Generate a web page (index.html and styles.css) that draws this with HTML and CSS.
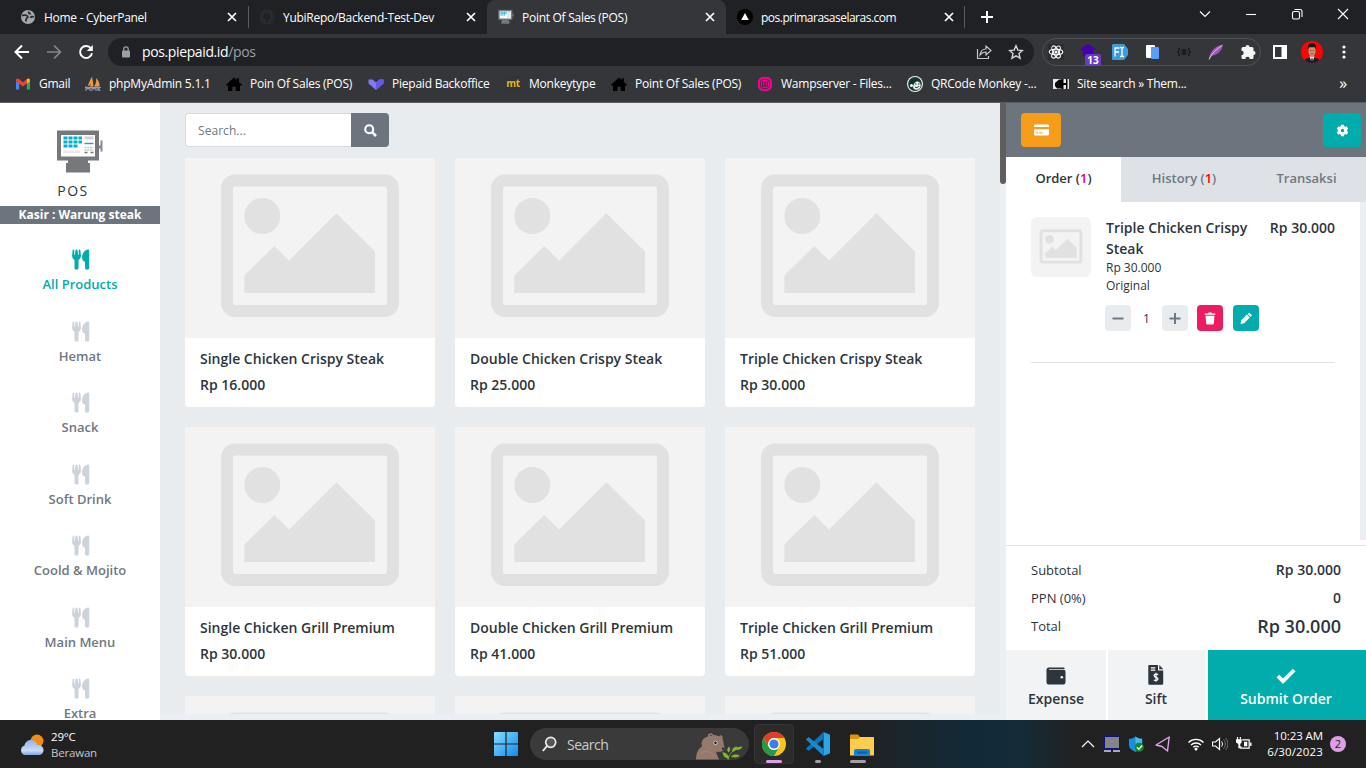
FILE: index.html
```html
<!DOCTYPE html>
<html lang="id">
<head>
<meta charset="utf-8">
<title>Point Of Sales (POS)</title>
<link rel="stylesheet" href="styles.css">
</head>
<body>
<svg class="defs" aria-hidden="true">
  <symbol id="x" viewBox="0 0 12 12"><path d="M2 2l8 8M10 2l-8 8" stroke="#fff" stroke-width="1.7" fill="none"/></symbol>
  <symbol id="home" viewBox="0 0 16 16"><path d="M8 1.5L10.7 4V2.3H13v3.8L16 8.8l-.9 1.1L14 9v6H9.700v-4.200H6.400V15H2V9L.9 9.900 0 8.800z" fill="#000"/></symbol>
  <symbol id="fork" viewBox="0 0 18 21"><path d="M1.500 .4C1 .4.700.9.600 1.400L.1 6.500C0 9 1.300 10.300 2.500 10.900V19c0 1 .9 1.700 2 1.700s2-.7 2-1.700v-8.100C7.700 10.300 9 9 8.900 6.500L8.400 1.400C8.300.9 8 .4 7.500.4S6.700.9 6.700 1.500V6H6.200L5.500 1.200C5.400.7 5 .4 4.500.4s-.9.3-1 .8L2.800 6H2.300V1.500C2.300.9 2 .4 1.500.4zM17.200 1.600C17.200.8 16.700.4 16 .4c-2.800.2-5.900 3.500-5.900 7.800 0 2.500 1 4.100 2.900 4.600V19c0 1 .9 1.700 2.100 1.700s2.100-.7 2.100-1.700z" fill="currentColor"/></symbol>
  <symbol id="ph" viewBox="0 0 250 180"><rect width="250" height="180" fill="#f3f3f3"/><rect x="42" y="22.500" width="166" height="130.500" rx="8" fill="none" stroke="#e1e1e1" stroke-width="12"/><circle cx="77.300" cy="58" r="18" fill="#e1e1e1"/><path d="M59.300 117.500L89.300 88l14.800 14.500 47.300-47.200L190 93.500V135H59.300z" fill="#e1e1e1"/></symbol>
  <symbol id="pos" viewBox="0 0 48 44"><path d="M1 .5h42v30H1z" fill="#77787b"/><path d="M43 15.500h1.500v-5h2v11h-2v-3H43z" fill="#8a8b8e"/><path d="M5 5h34v21.500H5z" fill="#fff"/><path d="M12 30h20v3h2v9.500H10V33h2z" fill="#77787b"/><path d="M7.500 8h18.500M7.500 12h18.500M7.500 16h14" stroke="#06aecb" stroke-width="3" stroke-dasharray="4 1" fill="none"/><path d="M28.500 6.500h9v3h-9z" fill="#d0d2d4"/><path d="M28.500 13.500h9" stroke="#06aecb" stroke-width="1.400"/><path d="M28.500 17.500h9M28.500 20h9" stroke="#c5c7ca" stroke-width="1.500" stroke-dasharray="2 .7"/><path d="M28.500 22.500h9" stroke="#77787b" stroke-width="1.500" stroke-dasharray="3 3"/><path d="M7.500 21.800h5M13.200 21.800h5M19 21.800h5" stroke="#e6e7e9" stroke-width="2.500"/></symbol>
</svg>

<header class="browser">
  <div class="tabstrip">
    <div class="tab"><svg class="i16" viewBox="0 0 16 16"><circle cx="8" cy="8" r="7" fill="#a4a8ad"/><path d="M2 6.500c2 0 3-1 4.500 0s2 1.500.5 2.500-1 2-1 3.500M9 2.500c-1 1.500.5 2.500 2 2M14 8c-1.500-.5-3-.5-3.500 1" fill="none" stroke="#2b2d30" stroke-width="1.800"/></svg><span>Home - CyberPanel</span><svg class="i12"><use href="#x"/></svg></div>
    <div class="tab divided"><svg class="i16" viewBox="0 0 16 16"><path d="M6 15v-3.500C3.800 10.800 3 9.500 3 7.600 3 6.500 3.400 5.700 4 5c-.2-1-.1-1.700.2-2.500 1 0 1.700.4 2.400 1h2.800c.7-.6 1.400-1 2.400-1 .3.800.4 1.500.2 2.500.6.700 1 1.500 1 2.600 0 1.900-.8 3.200-3 3.900V15" fill="none" stroke="#2b2f34" stroke-width="1.500"/><circle cx="8" cy="8" r="7" fill="none" stroke="#2b2f34" stroke-width="1.200"/></svg><span>YubiRepo/Backend-Test-Dev</span><svg class="i12"><use href="#x"/></svg></div>
    <div class="tab active"><svg class="i16"><use href="#pos"/></svg><span>Point Of Sales (POS)</span><svg class="i12"><use href="#x"/></svg></div>
    <div class="tab last"><svg class="i16" viewBox="0 0 16 16"><circle cx="8" cy="8" r="8" fill="#000"/><path d="M8 4l3.800 7H4.200z" fill="#fff"/></svg><span class="t4">pos.primarasaselaras.com</span><svg class="i12"><use href="#x"/></svg></div>
    <svg class="plus" viewBox="0 0 12 12"><path d="M6 0v12M0 6h12" stroke="#fff" stroke-width="2"/></svg>
    <div class="wincontrols">
      <svg viewBox="0 0 12 12"><path d="M1 3.500l5 5 5-5"/></svg>
      <svg viewBox="0 0 12 12"><path d="M1 6.500h10"/></svg>
      <svg viewBox="0 0 12 12"><rect x="1.500" y="3.500" width="7" height="7.500" rx="1.500"/><path d="M3.500 1.500h5.500a2 2 0 0 1 2 2v5.500"/></svg>
      <svg viewBox="0 0 12 12"><path d="M1 1l10 10M11 1L1 11"/></svg>
    </div>
  </div>
  <div class="toolbar">
    <div class="nav">
      <svg viewBox="0 0 16 16"><path d="M15 8H2M8 1.500L1.500 8 8 14.500" fill="none" stroke="#fff" stroke-width="2"/></svg>
      <svg viewBox="0 0 16 16"><path d="M1 8h13M8 1.500L14.500 8 8 14.500" fill="none" stroke="#84878b" stroke-width="1.700"/></svg>
      <svg viewBox="0 0 16 16"><path d="M13 4.500A6 6 0 1 0 14 9.200" fill="none" stroke="#fff" stroke-width="2"/><path d="M14.800 1v6H8.800z" fill="#fff"/></svg>
    </div>
    <div class="omnibox">
      <svg class="lock" viewBox="0 0 10 12"><rect x="1" y="4.500" width="8" height="7" rx="1" fill="#9aa0a6"/><path d="M2.800 5V3a2.200 2.200 0 0 1 4.400 0v2" fill="none" stroke="#9aa0a6" stroke-width="1.300"/></svg>
      <span class="url">pos.piepaid.id<i>/pos</i></span>
      <svg class="share" viewBox="0 0 16 16"><path d="M1.500 5v9.500h11V12M4 11c.5-4 3-6 6-6V2l5 4.500-5 4.500V8c-3 0-4.500 1-6 3z" fill="none" stroke="#c5c8cb" stroke-width="1.200"/></svg>
      <svg class="star" viewBox="0 0 16 16"><path d="M8 1.800l1.900 4.300 4.600.4-3.500 3.100 1.100 4.600L8 11.800l-4.100 2.400L5 9.600 1.500 6.500l4.600-.4z" fill="none" stroke="#d5d8db" stroke-width="1.400"/></svg>
    </div>
    <div class="exts">
      <svg viewBox="0 0 16 16"><path d="M0 0h16v16H0z" fill="#2b2d30"/><g fill="none" stroke="#fff" stroke-width="1.100"><ellipse cx="8" cy="8" rx="6.800" ry="2.700"/><ellipse cx="8" cy="8" rx="6.800" ry="2.700" transform="rotate(60 8 8)"/><ellipse cx="8" cy="8" rx="6.800" ry="2.700" transform="rotate(120 8 8)"/></g><circle cx="8" cy="8" r="1.500" fill="#fff"/></svg>
      <span class="cube"><svg viewBox="0 0 16 16"><path d="M8 0l8 5-3 2v5l-5 3-5-3V7L0 5z" fill="#4302a8"/></svg><b>13</b></span>
      <svg viewBox="0 0 16 16"><path d="M1 0h11l4 5v6l-4 5H1a1 1 0 0 1-1-1V1z" fill="#3c9bdc"/><path d="M3 12.500V4h4.500M3 8h4M8 3.500h1l1 .700 1-.700h1M10 4v8M8 12.500h1l1-.7 1 .7h1" fill="none" stroke="#fff" stroke-width="1.300"/></svg>
      <svg viewBox="0 0 16 16"><rect x="2" y="1" width="9" height="13" rx="1" fill="#fff"/><rect x="7" y="3" width="8" height="12" rx="1" fill="#589df6"/></svg>
      <svg viewBox="0 0 16 16"><path d="M4 4c-2 0 0 3.500-2.500 4C4 8.500 2 12 4 12M12 4c2 0 0 3.500 2.500 4-2.500.5-.5 4-2.500 4M5.500 6.200h5M5.500 8.200h5M5.500 10.200h5" fill="none" stroke="#111" stroke-width="1.200"/></svg>
      <svg viewBox="0 0 16 16"><path d="M1 15.500C1.500 7.500 7 2 15 .5 14.500 5 12 8 9 10c-2 1.300-4.500 1.500-6 2.500z" fill="#9b59b6"/><path d="M1 15.500C4 9 8 5.500 14 1.500" stroke="#e3c0f0" stroke-width="1" fill="none"/></svg>
      <svg viewBox="0 0 16 16"><path d="M5.500 3a2 2 0 0 1 4 0H12a1.500 1.500 0 0 1 1.500 1.500V7a2 2 0 0 1 0 4v2.500A1.500 1.500 0 0 1 12 15H9.700a2.200 2.200 0 0 0-4.400 0H3a1.500 1.500 0 0 1-1.500-1.500v-2.300a2.200 2.200 0 0 0 0-4.400V4.500A1.500 1.500 0 0 1 3 3z" fill="#f5f5f5"/></svg>
    </div>
    <div class="end">
      <svg viewBox="0 0 16 16"><path d="M1 1h14v14H1zM3 3v10h6.500V3z" fill="#fff" fill-rule="evenodd"/></svg>
      <svg class="avatar" viewBox="0 0 22 22"><clipPath id="av"><circle cx="11" cy="11" r="11"/></clipPath><g clip-path="url(#av)"><path d="M0 0h22v22H0z" fill="#fa0505"/><path d="M3 22c0-4 3-5.500 8-5.500s8 1.500 8 5.500z" fill="#171c2a"/><path d="M8.500 15.500L11 22l2.500-6.500z" fill="#fff"/><path d="M10.500 17h1l.7 5h-2.400z" fill="#222"/><ellipse cx="11" cy="10" rx="3.600" ry="5.800" fill="#c59174"/><path d="M7 8.500C6.500 4 8 2 11 2s4.500 2 4 6.500L14 6.300H8z" fill="#1b1516"/><path d="M9 9.500h1.500M11.700 9.500h1.500M9.700 13h2.600" stroke="#754a3c" stroke-width=".8"/></g></svg>
      <svg viewBox="0 0 16 16"><g fill="#fff"><circle cx="8" cy="3" r="1.600"/><circle cx="8" cy="8" r="1.600"/><circle cx="8" cy="13" r="1.600"/></g></svg>
    </div>
  </div>
  <nav class="bookmarks">
    <div><svg class="i16" viewBox="0 0 16 16"><path d="M1 4v9.500h3.200V7z" fill="#4285f4"/><path d="M15 4v9.500h-3.200V7z" fill="#34a853"/><path d="M1 4.200c0-1.700 1.800-2.300 3-1.200l4 3.200L12 3v4.200L8 10.500 1 5.500z" fill="#ea4335"/><path d="M11.800 3.200C13 2 15 2.500 15 4.200v1l-3.200 2.500z" fill="#fbbc04"/></svg><span>Gmail</span></div>
    <div><svg class="i16" viewBox="0 0 16 16"><path d="M7 .5C8 5 7 8 2.500 10.500 4 7 5 4 7 .5zM11 2c3 3 4 6 3.500 8.500H9C11 8 11.500 5 11 2zM7.500 3l1 7.500H5z" fill="#f29b38"/><path d="M0 11.500h16M1 15v-4l2 2 2-2v4M7 15v-4l2 2 2-2v4M13 15v-4l2 4" fill="none" stroke="#9999b8" stroke-width="1.100"/></svg><span>phpMyAdmin 5.1.1</span></div>
    <div><svg class="i16"><use href="#home"/></svg><span>Poin Of Sales (POS)</span></div>
    <div><svg class="i16" viewBox="0 0 16 16"><path d="M.5 3.500h4l3.500 3 3.500-3h4v4L8 14 .5 7.500z" fill="#8278f4"/><path d="M8 7l3.500-3.500h4v4L8 14z" fill="#6558ec"/></svg><span>Piepaid Backoffice</span></div>
    <div><span class="mt">mt</span><span>Monkeytype</span></div>
    <div><svg class="i16"><use href="#home"/></svg><span>Point Of Sales (POS)</span></div>
    <div><svg class="i16" viewBox="0 0 16 16"><rect x="1" y="1" width="14" height="14" rx="5" fill="#f2058f"/><rect x="3.300" y="3.300" width="9.400" height="9.400" rx="3.500" fill="none" stroke="#4a2440"/><path d="M5.700 5.500v4.800h4.600V5.500M8 5.500v4.500" fill="none" stroke="#4a2440" stroke-width="1.100"/></svg><span>Wampserver - Files...</span></div>
    <div><svg class="i16" viewBox="0 0 16 16"><circle cx="8" cy="8" r="8" fill="#eef4f1"/><circle cx="8" cy="8" r="6.900" fill="#183a35"/><circle cx="9.500" cy="9.500" r="4.200" fill="#e8eeeb"/><path d="M3 10C3 5 6 2 12 4 9 6 6.500 6 6 12z" fill="#10302c"/><path d="M8 8h1.500M11 8h1.500M8 11c1.500 1.300 3 .5 4-1" fill="none" stroke="#183a35"/><circle cx="4.500" cy="9.500" r="1.500" fill="#fff"/></svg><span>QRCode Monkey -...</span></div>
    <div><svg class="i16" viewBox="0 0 16 16"><path d="M0 3h16v10H0z" fill="#e8e8e8"/><path d="M2 7l4-3.500h3v9H4L2 10zM8.500 3h2v4H13V3h1.500v10H13V9h-2.500v4h-2z" fill="#050505"/></svg><span>Site search » Them...</span></div>
    <span class="more">»</span>
  </nav>
</header>

<div class="app">
  <aside class="side">
    <svg class="logo"><use href="#pos"/></svg>
    <div class="brand">POS</div>
    <div class="cashier">Kasir : Warung steak</div>
    <ul class="cats">
      <li class="on"><svg><use href="#fork"/></svg><span>All Products</span></li>
      <li><svg><use href="#fork"/></svg><span>Hemat</span></li>
      <li><svg><use href="#fork"/></svg><span>Snack</span></li>
      <li><svg><use href="#fork"/></svg><span>Soft Drink</span></li>
      <li><svg><use href="#fork"/></svg><span>Coold &amp; Mojito</span></li>
      <li><svg><use href="#fork"/></svg><span>Main Menu</span></li>
      <li><svg><use href="#fork"/></svg><span>Extra</span></li>
    </ul>
  </aside>
  <main class="content">
    <div class="scroll">
      <div class="search"><span class="field">Search...</span><span class="go"><svg viewBox="0 0 13 13"><circle cx="5.200" cy="5.200" r="4" fill="none" stroke="#fff" stroke-width="2.100"/><path d="M8 8l4 4" stroke="#fff" stroke-width="2.500"/></svg></span></div>
      <div class="products">
        <article><svg><use href="#ph"/></svg><h3>Single Chicken Crispy Steak</h3><p>Rp 16.000</p></article>
        <article><svg><use href="#ph"/></svg><h3>Double Chicken Crispy Steak</h3><p>Rp 25.000</p></article>
        <article><svg><use href="#ph"/></svg><h3>Triple Chicken Crispy Steak</h3><p>Rp 30.000</p></article>
        <article><svg><use href="#ph"/></svg><h3>Single Chicken Grill Premium</h3><p>Rp 30.000</p></article>
        <article><svg><use href="#ph"/></svg><h3>Double Chicken Grill Premium</h3><p>Rp 41.000</p></article>
        <article><svg><use href="#ph"/></svg><h3>Triple Chicken Grill Premium</h3><p>Rp 51.000</p></article>
        <article><svg><use href="#ph"/></svg></article>
        <article><svg><use href="#ph"/></svg></article>
        <article><svg><use href="#ph"/></svg></article>
      </div>
    </div>
    <div class="bar"><div class="thumb"></div></div>
  </main>
  <section class="order">
    <div class="ohead">
      <span class="btn card"><svg viewBox="0 0 15 12"><path d="M1.300.5h12.400a1.300 1.300 0 0 1 1.300 1.300V3H0V1.800A1.300 1.300 0 0 1 1.300.5zM0 5.200h15v5a1.300 1.300 0 0 1-1.300 1.300H1.300A1.300 1.300 0 0 1 0 10.200z" fill="#fff"/><path d="M2 8.900h2.200M5.200 8.900h3.300" stroke="#f59c1a" stroke-width="1"/></svg></span>
      <span class="btn gear"><svg viewBox="0 0 14 14"><circle cx="7" cy="7" r="3.500" fill="none" stroke="#fff" stroke-width="3.200"/><path d="M7 .8v3M7 10.200v3M1.600 3.900l2.600 1.500M9.800 8.600l2.600 1.500M12.400 3.900L9.800 5.400M4.200 8.600l-2.600 1.500" stroke="#fff" stroke-width="3.200"/></svg></span>
    </div>
    <div class="otabs"><span class="on">Order (<b class="pk">1</b>)</span><span>History (<b>1</b>)</span><span>Transaksi</span></div>
    <div class="list">
      <div class="item">
        <svg class="thumbimg"><use href="#ph"/></svg>
        <div class="info">
          <h4>Triple Chicken Crispy Steak</h4>
          <div class="unit">Rp 30.000</div>
          <div class="variant">Original</div>
          <div class="qty">
            <span class="q"><svg viewBox="0 0 12 12"><path d="M.5 6h11" stroke="#6f7982" stroke-width="2"/></svg></span>
            <span class="n">1</span>
            <span class="q"><svg viewBox="0 0 12 12"><path d="M.5 6h11M6 .5v11" stroke="#6f7982" stroke-width="2"/></svg></span>
            <span class="q del"><svg viewBox="0 0 12 14"><path d="M.3 1.500h3.500L4.500.5h3l.7 1h3.500V3H.3zM1.200 4h9.600l-.7 8.300a1.300 1.300 0 0 1-1.300 1.200H3.200a1.300 1.300 0 0 1-1.300-1.200z" fill="#fff"/></svg></span>
            <span class="q edit"><svg viewBox="0 0 13 13"><path d="M.5 12.500l.8-4L7.500 2.300l3.200 3.200-6.200 6.200zM8.300 1.500l.8-.8a1.200 1.200 0 0 1 1.600 0l1.600 1.600a1.200 1.200 0 0 1 0 1.600l-.8.800z" fill="#fff"/></svg></span>
          </div>
        </div>
        <div class="amt">Rp 30.000</div>
      </div>
    </div>
    <dl class="totals">
      <dt>Subtotal</dt><dd>Rp 30.000</dd>
      <dt>PPN (0%)</dt><dd>0</dd>
      <dt>Total</dt><dd class="big">Rp 30.000</dd>
    </dl>
    <div class="actions">
      <span><svg width="20" height="18" viewBox="0 0 20 18"><path d="M2.500.5h15A1 1 0 0 1 18.500 2H3v.8h14.500A1.900 1.900 0 0 1 19.500 4.700v10.500a2.200 2.200 0 0 1-2.200 2.200H2.700A2.200 2.200 0 0 1 .5 15.200V2.700A2.200 2.200 0 0 1 2.500.5z" fill="#2d353c"/><circle cx="15.800" cy="10.300" r="1.300" fill="#fff"/></svg>Expense</span>
      <span class="sift"><svg width="16" height="20" viewBox="0 0 16 20"><path d="M1.500 0H10v5.500h5.200v13a1.200 1.200 0 0 1-1.200 1.200H1.500A1.200 1.200 0 0 1 .3 18.500v-17A1.200 1.200 0 0 1 1.500 0zM11.300 0l4 4.200h-4z" fill="#2d353c"/><path d="M2.800 2.800h4.500M2.800 5.200h4.500M10 9.800c-.5-.5-1.200-.6-2-.6-2.600 0-2.600 2.600 0 3.100s2.600 3.200 0 3.200c-.9 0-1.600-.2-2.100-.7M8 7.800v9" fill="none" stroke="#fff" stroke-width="1.200"/></svg>Sift</span>
      <span class="submit"><svg width="20" height="18" viewBox="0 0 20 18"><path d="M1.800 9l5.200 5.200L18.200 3" fill="none" stroke="#fff" stroke-width="3.800"/></svg>Submit Order</span>
    </div>
  </section>
</div>

<footer class="taskbar">
  <div class="weather">
    <svg width="26" height="22" viewBox="0 0 26 22"><defs><linearGradient id="cl" x2="0" y2="1"><stop stop-color="#8fb4ea"/><stop offset=".7" stop-color="#c9dbf7"/><stop offset="1" stop-color="#7fa3e3"/></linearGradient></defs><circle cx="18" cy="7" r="6.500" fill="#f68b13"/><path d="M5.500 21a5 5 0 0 1 0-9.500C6 8 9 6 12 6c3.300 0 5.500 2 6.300 5 4 0 6.200 2 6.200 5 0 3-2 5-5 5z" fill="url(#cl)"/></svg>
    <div><div>29°C</div><div class="dim">Berawan</div></div>
  </div>
  <div class="apps">
    <svg class="start" viewBox="0 0 24 24"><defs><linearGradient id="wn" x2="1" y2="1"><stop stop-color="#8bdcfb"/><stop offset="1" stop-color="#0d8bf2"/></linearGradient></defs><path d="M0 1a1 1 0 0 1 1-1h10.400v11.400H0zM12.600 0H23a1 1 0 0 1 1 1v10.400H12.600zM0 12.600h11.400V24H1a1 1 0 0 1-1-1zM12.600 12.600H24V23a1 1 0 0 1-1 1H12.600z" fill="url(#wn)"/></svg>
    <div class="find">
      <svg width="15" height="16" viewBox="0 0 15 16"><circle cx="8.700" cy="6.300" r="5" fill="#565656" stroke="#eee" stroke-width="1.700"/><path d="M5 10l-4.200 5" stroke="#eee" stroke-width="1.900"/></svg>
      <span>Search</span>
      <svg class="bear" width="48" height="28" viewBox="0 0 48 28"><path d="M1 27.500C1 21 3 17 7 14.500 5.500 9 8.500 5.500 13 4.500 12 1 17 0 18.500 3c2 0 4 .5 5.500 1.500 1.500-2.500 4.500-1 3.500 2 .8 2 1 4 1.300 6.500l.9 3.500c-1 3-4.500 3.700-8.500 3.300.5 3 2 5.500 2.800 7.700z" fill="#94796c"/><path d="M5 22c5-4 10-3 14 2" stroke="#a08678" stroke-width="1.200" fill="none"/><circle cx="20.500" cy="10.800" r="2" fill="#e9e4e0"/><circle cx="20.500" cy="10.800" r="1.300" fill="#111"/><path d="M26.500 15.500l3 .5-1.500 2.500z" fill="#2d211d"/><path d="M14.500 4c.3-1.700 2.400-1.600 2.700-.2z" fill="#5b453b"/><path d="M33 28c1-6 5-11 13-13" stroke="#669c23" fill="none"/><path d="M34 27c-4-1-6-3-6.500-7 4 1 6.500 3 6.500 7zM33.500 20.500c-2-2-1.500-4 .5-6 1.700 2.500 1.500 4.500-.5 6zM37 20c0-3.500 2-5 5-5.500 0 3-2 5-5 5.500zM40 17.500c2.500-3 5-3 7.500-2.500-2 3-5 3.500-7.500 2.500zM36 24.500c3-2.500 6-2.500 9-.5-3 1.700-6 2-9 .5z" fill="#83b928"/></svg>
    </div>
    <div class="app-i live"><svg width="24" height="24" viewBox="0 0 24 24"><circle cx="12" cy="12" r="12" fill="#fcc31d"/><path d="M1.600 6A12 12 0 0 1 22.400 6H12a6 6 0 0 0-5.200 9z" fill="#e33b2e"/><path d="M1.600 6A12 12 0 0 0 12 24l5.200-9a6 6 0 0 1-10.400 0z" fill="#249a48"/><circle cx="12" cy="12" r="5.900" fill="#fff"/><circle cx="12" cy="12" r="4.600" fill="#387fe8"/></svg><i></i></div>
    <div class="app-i code"><svg width="24" height="24" viewBox="0 0 24 24"><path d="M17.500 0L24 2.800v18.400L17.500 24z" fill="#2aa5ee"/><path d="M17.500 0v7L2.500 19 0 16.600z" fill="#0f74b8"/><path d="M17.500 24v-7L2.500 5 0 7.400z" fill="#1789d0"/></svg><i></i></div>
    <div class="app-i files"><svg width="24" height="22" viewBox="0 0 24 22"><path d="M0 1.500A1 1 0 0 1 1 .5h7l2 2.500v3H0z" fill="#dc9508"/><path d="M0 5h8l2-2h13a1 1 0 0 1 1 1v17.500H0z" fill="#ffcd4e"/><path d="M4 21.500V17a2 2 0 0 1 2-2h12a2 2 0 0 1 2 2v4.500z" fill="#1681d8"/><path d="M7 18.500h10" stroke="#0b5ba8" stroke-width="2"/></svg><i></i></div>
  </div>
  <div class="tray">
    <svg viewBox="0 0 16 16"><path d="M2 11l6-6 6 6" fill="none" stroke="#fff" stroke-width="1.200"/></svg>
    <svg viewBox="0 0 16 16"><path d="M.5.500h15v12H.5z" fill="#858585" stroke="#10108a"/><path d="M0 15h7M9 15h7" stroke="#aaa" stroke-width="1.800"/></svg>
    <svg viewBox="0 0 17 17"><path d="M1 3c3 0 5-1 7-2.500C10 2 12 3 15 3v6c0 4-3 6-7 8-4-2-7-4-7-8z" fill="#168fdf"/><path d="M8 .5C10 2 12 3 15 3v5H8z" fill="#42bbf3"/><circle cx="12" cy="12" r="4.800" fill="#108a20"/><path d="M9.500 12l2 2 3.500-4" stroke="#fff" stroke-width="1.500" fill="none"/></svg>
    <svg class="loc" viewBox="0 0 16 16"><path d="M14.200 1L1 9l6 1.500 5.500 4.500z" fill="none" stroke="#dda6e6" stroke-width="1.400" stroke-linejoin="round"/></svg>
    <svg class="wifi" viewBox="1 1 16 16"><g fill="none" stroke="#fff" stroke-width="1.400"><path d="M1.500 7.500a10.600 10.600 0 0 1 15 0M4 10a7.100 7.100 0 0 1 10 0M6.300 12.300a3.800 3.800 0 0 1 5.400 0"/></g><circle cx="9" cy="14" r="1.500" fill="#fff"/></svg>
    <svg viewBox="1.500 1 16 16"><path d="M2 7h3l4-3.500v11L5 11H2z" fill="none" stroke="#fff" stroke-width="1.200"/><path d="M11 6.500c1.300 1.600 1.300 3.600 0 5" fill="none" stroke="#fff"/><path d="M13 4.500c2.500 2.800 2.500 6.200 0 9M15 3c3.300 3.800 3.300 8.200 0 12" fill="none" stroke="#777"/></svg>
    <svg class="batt" viewBox="1 1 17 17"><path d="M7.500 5h7.500v9H6v-2" fill="none" stroke="#fff" stroke-width="1.300"/><path d="M9.500 7h3.500v5H9.500zM16 8h1.500v3.500H16zM1 4.500h6V8L5.500 9.500V14H3.500V9.500L1 8zM2 2h1.200v3H2zM5 2h1.200v3H5z" fill="#fff"/></svg>
    <div class="clock"><div>10:23 AM</div><div class="date">6/30/2023</div></div>
    <span class="badge">2</span>
  </div>
</footer>
</body>
</html>
```
FILE: styles.css
```css
* { box-sizing: border-box; }
body { margin: 0; width: 1366px; height: 768px; overflow: hidden; display: flex; flex-direction: column; font-family: "Open Sans", "Noto Sans", sans-serif; color: #2d353c; background: #ebeff3; }
h3, h4, p, ul, dl, dd { margin: 0; padding: 0; }
svg { display: block; flex: none; }
.defs { position: absolute; width: 0; height: 0; }
.i16 { width: 16px; height: 16px; }
.i12 { width: 12px; height: 12px; }

/* Browser frame */
.browser { flex: none; height: 103px; background: #35363a; color: #fff; font-size: 12px; border-bottom: 1px solid #5c5d60; }
.tabstrip { height: 34px; background: #202124; display: flex; align-items: center; padding-left: 9px; }
.tab { width: 239px; height: 34px; padding: 0 10px 0 11px; display: flex; align-items: center; gap: 8px; letter-spacing: -.28px; }
.tab span { flex: 1; white-space: nowrap; }
.tab.divided { border-left: 1px solid; border-image: linear-gradient(transparent 7px, #5a5c60 7px, #5a5c60 27px, transparent 27px) 1; padding-left: 10px; }
.tab .t4 { letter-spacing: -.5px; }
.tab.active { background: #35363a; border-radius: 8px 8px 0 0; }
.tab.last { border-right: 1px solid; border-image: linear-gradient(transparent 7px, #5a5c60 7px, #5a5c60 27px, transparent 27px) 1; padding-right: 9px; }
.plus { width: 12px; height: 12px; margin-left: 16px; }
.wincontrols { margin-left: auto; display: flex; gap: 34px; padding: 0 17px 6px 0; }
.wincontrols svg { width: 12px; height: 12px; fill: none; stroke: #fff; stroke-width: 1.1; }
.toolbar { height: 36px; display: flex; align-items: center; padding-left: 14px; }
.nav { display: flex; gap: 16px; width: 94px; }
.nav svg, .exts svg, .end svg { width: 16px; height: 16px; }
.omnibox { width: 926px; height: 28px; border-radius: 14px; background: #202124; display: flex; align-items: center; padding: 0 10px 0 13px; }
.lock { width: 10px; height: 12px; }
.url { margin-left: 11px; padding-bottom: 1px; font-size: 14px; letter-spacing: -.38px; flex: 1; }
.url i { font-style: normal; color: #9aa0a6; }
.share { width: 16px; height: 16px; }
.star { width: 16px; height: 16px; margin-left: 16px; }
.exts { margin-left: 8px; width: 219px; height: 28px; border: 1px solid #505257; border-radius: 14px; display: flex; align-items: center; gap: 16px; padding-left: 5px; }
.cube { position: relative; width: 16px; height: 16px; }
.cube b { position: absolute; left: 5px; top: 10px; width: 16px; height: 12px; border-radius: 2px; background: #6a3bc0; font-size: 10px; line-height: 12px; text-align: center; }
.end { display: flex; align-items: center; margin-left: 11px; gap: 13px; }
.end .avatar { width: 22px; height: 22px; }
.bookmarks { height: 27px; letter-spacing: -.23px; display: grid; grid-template-columns: 70px 141px 142px 137px 106px 146px 150px 146px 1fr auto; align-items: center; padding: 0 19px 0 15px; }
.bookmarks div { display: flex; align-items: center; gap: 8px; white-space: nowrap; }
.bookmarks .mt { width: 16px; height: 16px; border-radius: 3px; background: #323437; color: #e2b714; font-weight: 700; font-size: 10px; line-height: 14px; text-align: center; }
.bookmarks .more { font-size: 16px; line-height: 20px; padding-bottom: 2px; }

/* Application */
.app { flex: none; height: 617px; display: flex; overflow: hidden; }
.side { width: 160px; background: #fff; text-align: center; overflow: hidden; }
.logo { width: 48px; height: 44px; margin: 27px 0 0 56px; }
.brand { margin: 7px 14px 0 0; height: 22px; font-size: 14px; line-height: 20px; letter-spacing: 1.5px; font-weight: 500; }
.cashier { margin-top: 3px; height: 18px; line-height: 18px; background: #6c757d; color: #fff; font-size: 12px; font-weight: 700; }
.cats { list-style: none; padding-top: 25px; }
.cats li { height: 71.5px; color: #6f7782; font-size: 13px; font-weight: 600; line-height: 20px; }
.cats svg { width: 18px; height: 21px; margin: 0 auto 4px 72px; color: #cdd3da; }
.cats .on, .cats .on svg { color: #00acac; }
.content { width: 846px; height: 611px; display: flex; }
.scroll { width: 840px; padding: 10px 25px 0; background: #e8ecef; overflow: hidden; }
.bar { width: 6px; background: #ebeff3; }
.thumb { height: 81px; border-radius: 0 0 3px 3px; background: #5e5e5e; }
.search { display: flex; height: 34px; width: 204px; }
.field { width: 166px; background: #fff; border: 1px solid #d5dbe0; border-right: 0; border-radius: 4px 0 0 4px; padding-left: 12px; font-size: 12px; letter-spacing: .05px; line-height: 33px; color: #6f7982; }
.go { width: 38px; background: #6c757d; border-radius: 0 4px 4px 0; display: grid; place-items: center; }
.go svg { width: 13px; height: 13px; }
.products { margin-top: 11px; display: grid; grid-template-columns: repeat(3, 250px); gap: 20px; }
article { height: 249px; background: #fff; border-radius: 4px; overflow: hidden; }
article svg { width: 250px; height: 180px; }
article h3, article p { margin-left: 15px; font-size: 14px; font-weight: 600; line-height: 20px; white-space: nowrap; }
article h3 { margin-top: 11px; }
article p { margin-top: 6px; }

.order { width: 360px; background: #fff; display: flex; flex-direction: column; }
.ohead { height: 54px; background: #6c757d; display: flex; justify-content: space-between; padding: 10px 5px 0 15px; }
.btn { height: 34px; border-radius: 4px; display: grid; place-items: center; }
.card { width: 40px; background: #f59c1a; }
.card svg { width: 15px; height: 12px; }
.gear { width: 38px; background: #00acac; }
.gear svg { width: 13px; height: 13px; }
.otabs { height: 45px; background: #dee2e6; display: grid; grid-template-columns: 115px 126px 119px; font-size: 13px; font-weight: 600; line-height: 43px; text-align: center; color: #6f7782; }
.otabs .on { background: #fff; color: #2d353c; }
.otabs b { color: #f00; font-weight: 600; }
.otabs .pk { color: #f0005c; }
.list { height: 338px; border-right: 6px solid #ebeff3; padding: 15px 25px 0; }
.item { display: flex; height: 146px; border-bottom: 1px solid #dee2e6; }
.thumbimg { width: 60px; height: 60px; border-radius: 6px; background: #f3f3f3; }
.info { width: 164px; padding-left: 15px; }
.info h4, .amt { font-size: 14px; font-weight: 600; line-height: 21px; }
.unit { font-size: 12px; line-height: 18px; font-weight: 500; }
.variant { font-size: 12px; line-height: 18px; }
.qty { display: flex; align-items: center; margin: 10px 0 0 -1px; width: 160px; }
.q { flex: none; width: 26px; height: 26px; border-radius: 4px; background: #e8ecef; display: grid; place-items: center; }
.q svg { width: 12px; height: 13px; }
.n { width: 31px; text-align: center; font-size: 12px; font-weight: 500; }
.del { background: #ed1c60; margin: 0 10px 0 9px; }
.edit { background: #00acac; }
.amt { flex: 1; text-align: right; white-space: nowrap; }
.totals { margin-top: 5px; height: 105px; border-top: 1px solid #e4e7ea; padding: 10px 25px 0; display: grid; grid-template-columns: 1fr auto; grid-auto-rows: 28px; line-height: 28px; font-size: 13px; }
.totals dd { font-size: 14px; font-weight: 600; text-align: right; }
.totals .big { font-size: 18px; }
.actions { height: 70px; display: grid; grid-template-columns: 100px 98px 158px; gap: 2px; }
.actions span { background: #f1f3f5; font-size: 14px; font-weight: 600; line-height: 21px; display: flex; flex-direction: column; align-items: center; justify-content: flex-end; gap: 3px; padding-bottom: 11px; }
.actions .sift { padding-right: 2px; }
.actions .submit { background: #00acac; color: #fff; padding-right: 2px; }

/* Taskbar */
.taskbar { flex: none; height: 48px; color: #fff; background: linear-gradient(90deg, #212121 0 860px, #112a38 970px, #142b38 1020px, #212121 1075px); display: grid; grid-template-columns: 493px 587px 1fr; font-size: 11.5px; }
.weather { display: flex; align-items: center; gap: 6px; padding-left: 19px; line-height: 16px; letter-spacing: -.2px; }
.weather svg { margin-top: 2px; }
.weather > div { padding-top: 1px; }
.dim { color: #c6c6c6; }
.apps { display: flex; align-items: center; }
.start { width: 24px; height: 24px; margin: 0 12px 0 1px; }
.find { width: 219px; height: 32px; border-radius: 16px; background: #3a3a3a; display: flex; align-items: center; padding-left: 12px; margin-right: 5px; font-size: 14px; color: #ccc; }
.find span { margin-left: 10px; flex: 1; letter-spacing: -.5px; }
.bear { margin: 3px 6px 0 0; }
.app-i { width: 40px; height: 40px; margin-right: 4px; display: flex; flex-direction: column; align-items: center; justify-content: flex-end; gap: 4px; border-radius: 4px; }
.app-i i { width: 6px; height: 3px; border-radius: 2px; background: #a0a0a0; margin-bottom: 1px; }
.app-i.live { background: #2b2b2b; border: 1px solid #353535; }
.app-i.live i { width: 16px; background: #dda0e4; margin-bottom: 0; }
.app-i.files i { width: 16px; margin-right: 8px; }
.tray { display: flex; align-items: center; }
.tray svg { width: 16px; height: 16px; margin-right: 8px; }
.tray .loc { margin: 0 17px 0 3px; }
.tray .wifi { margin-right: 8px; }
.tray .batt { margin: 0; }
.clock { flex: 1; text-align: right; line-height: 16px; letter-spacing: -.1px; }
.date { letter-spacing: .15px; }
.badge { margin: 0 20px 0 7px; width: 16px; height: 16px; border-radius: 50%; background: #dda0e4; color: #222; text-align: center; font-size: 11px; line-height: 16px; }
```
